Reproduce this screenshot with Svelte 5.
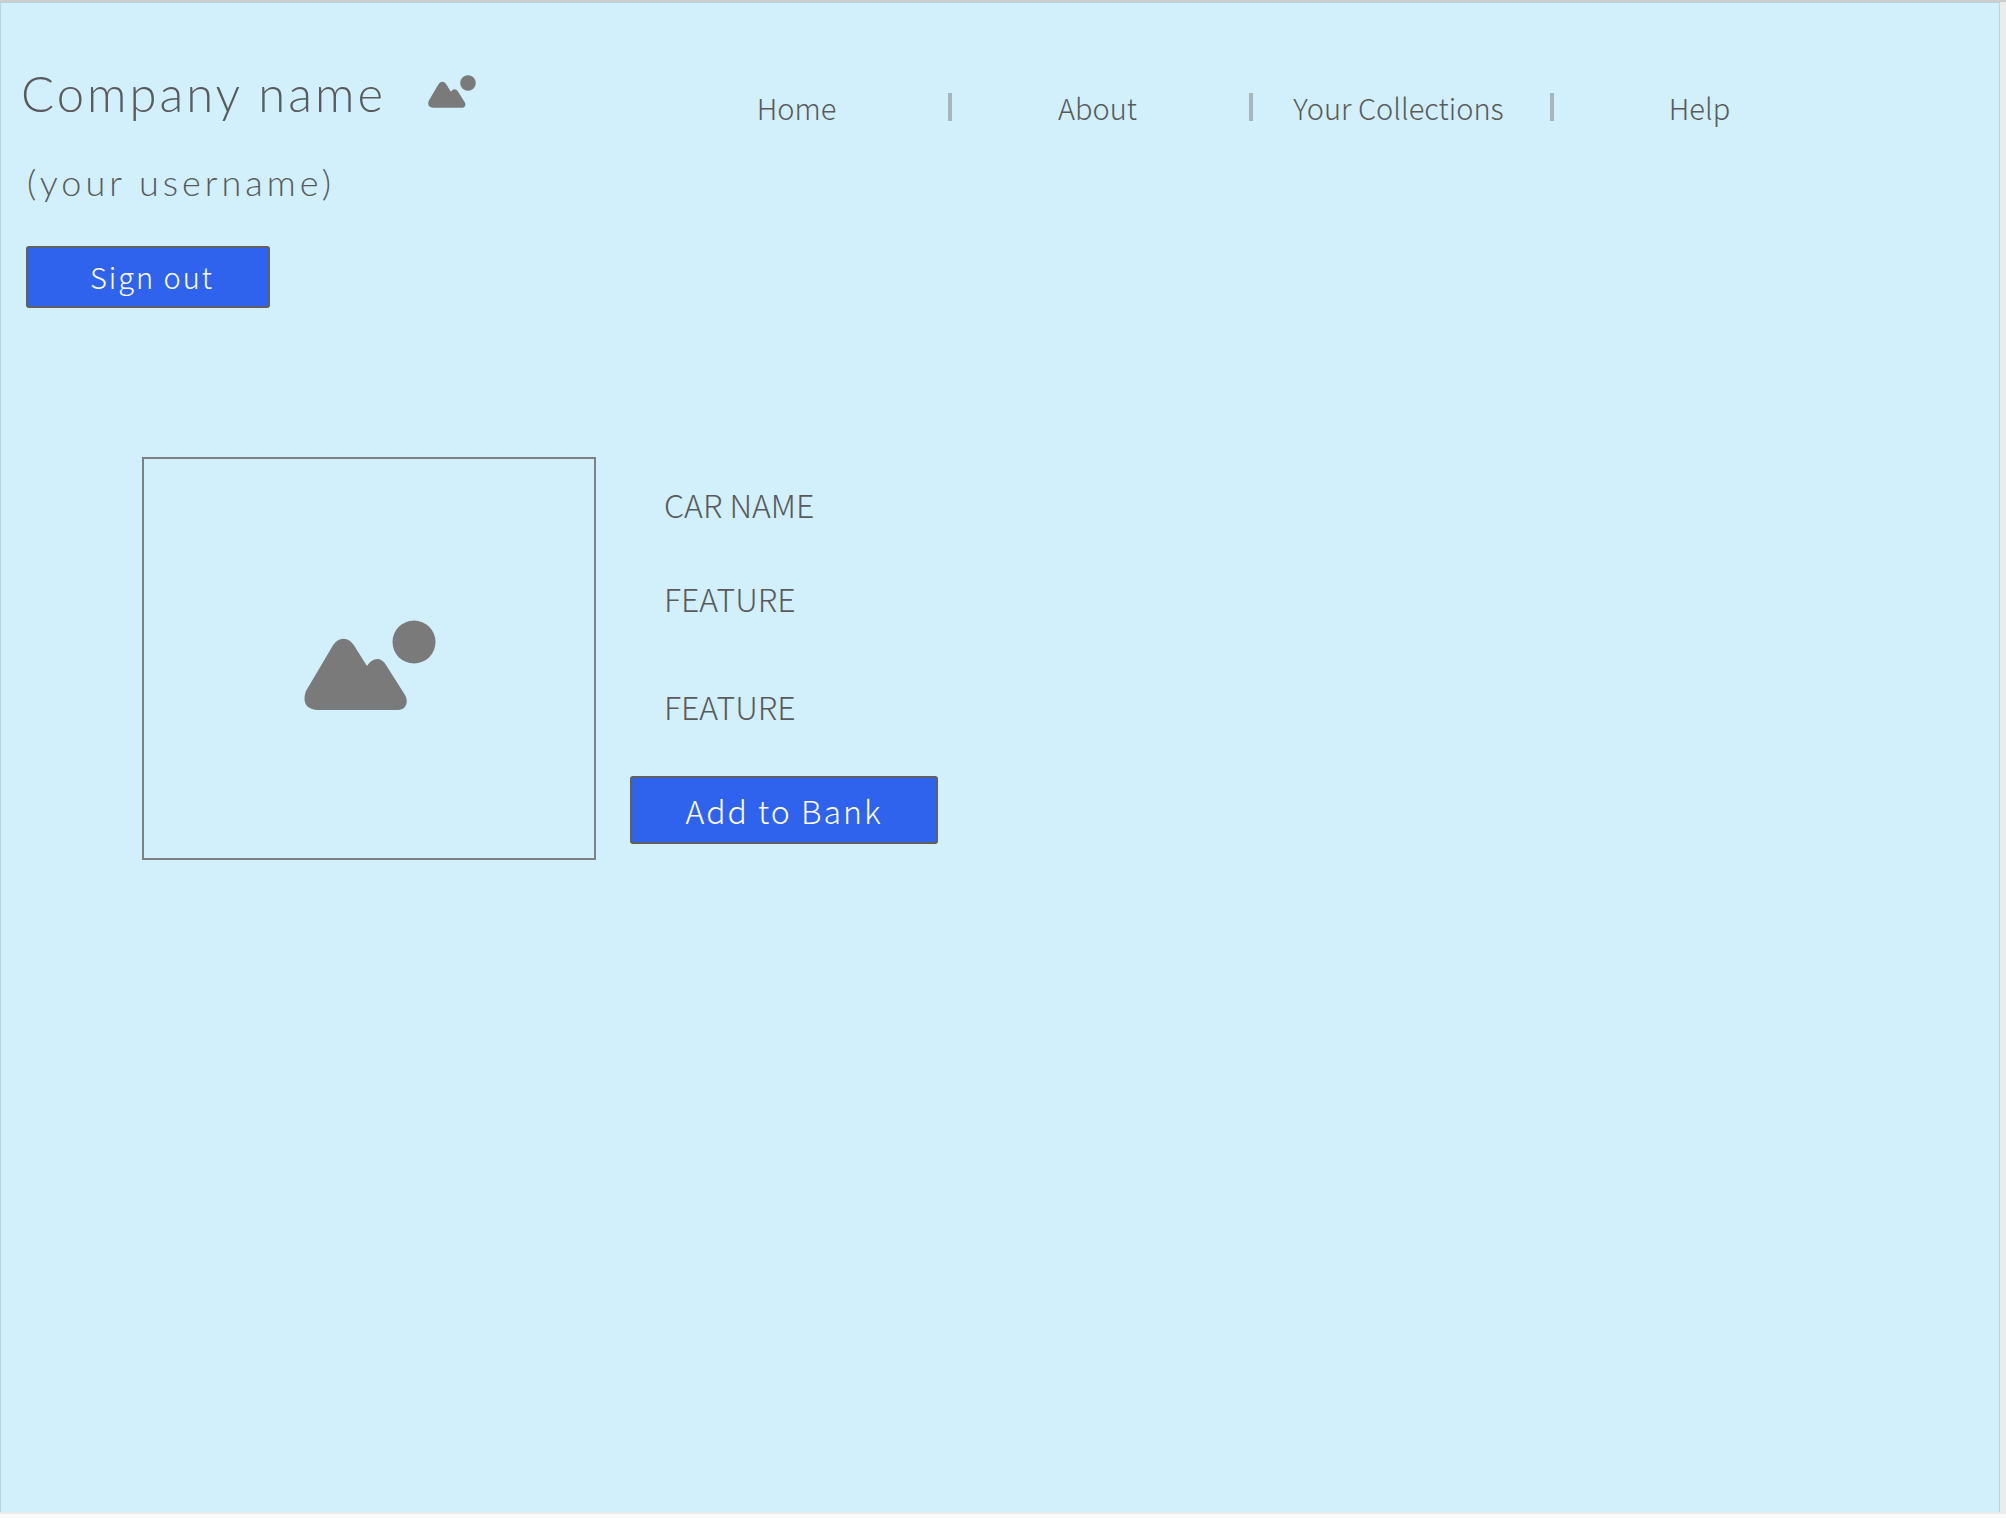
<script>
  const links = ['Home', 'About', 'Your Collections', 'Help'];
  const details = ['CAR NAME', 'FEATURE', 'FEATURE'];
</script>

{#snippet picture()}
  <svg viewBox="0 0 132 90" aria-hidden="true">
    <path
      d="M2 71 L28 27 C34 16 45 16 51 27 L63 46 C69 37 77 37 82 45 L101 75 C105 82 102 90 94 90 H14 C2 90-2 82 2 71 Z"
    />
    <circle cx="110" cy="22" r="21.5" />
  </svg>
{/snippet}

<div class="frame">
  <div class="page">
    <header>
      <div class="account">
        <div class="brand">
          <h1>Company name</h1>
          <span class="logo">{@render picture()}</span>
        </div>
        <p class="username">(your username)</p>
        <button class="sign-out" type="button">Sign out</button>
      </div>
      <nav aria-label="Main">
        <ul>
          {#each links as link}
            <li><a href="#top">{link}</a></li>
          {/each}
        </ul>
      </nav>
    </header>

    <main>
      <div class="photo">{@render picture()}</div>
      <section class="info">
        <ul class="details">
          {#each details as detail}
            <li>{detail}</li>
          {/each}
        </ul>
        <button class="add" type="button">Add to Bank</button>
      </section>
    </main>
  </div>
</div>

<style>
  :global(body) {
    margin: 0;
    background: #ececec;
  }

  .frame {
    box-sizing: border-box;
    display: flex;
    min-height: 100vh;
    padding-right: 6px;
    border-top: 2px solid #cdcdcd;
    border-bottom: 4px solid #fbfbfb;
    padding-bottom: 2px;
  }

  .page {
    flex: 1;
    border: 1px solid #b5d5e1;
    border-bottom: 0;
    background: #d1f0fb;
    color: #5a5a5a;
    font-family: 'Noto Sans CJK JP', 'Noto Sans', sans-serif;
    font-weight: 300;
  }

  h1,
  p,
  ul {
    margin: 0;
    padding: 0;
    font-weight: 300;
    list-style: none;
  }

  header {
    display: flex;
    align-items: flex-start;
  }

  .account {
    box-sizing: border-box;
    flex: 0 0 650px;
    padding: 60px 0 0 20px;
  }

  .brand {
    display: flex;
    gap: 42px;
  }

  h1 {
    font-family: Lato, sans-serif;
    font-size: 49px;
    line-height: 60px;
    letter-spacing: 3px;
  }

  .logo {
    width: 48px;
    padding-top: 12px;
  }

  svg {
    display: block;
    width: 100%;
    fill: #7a7a7a;
  }

  .username {
    padding: 37px 0 0 6px;
    font-family: Lato, sans-serif;
    font-size: 36px;
    line-height: 44px;
    letter-spacing: 4px;
  }

  button {
    display: block;
    box-sizing: border-box;
    padding: 0;
    border: 2px solid #606060;
    border-radius: 3px;
    background: #2f62ed;
    color: #fff;
    font-family: inherit;
    font-weight: 300;
    letter-spacing: 2px;
    cursor: pointer;
  }

  .sign-out {
    width: 244px;
    height: 62px;
    margin: 42px 0 0 5px;
    padding: 0 0 2px 8px;
    font-size: 29px;
  }

  nav {
    flex: 1;
    padding: 90px 144px 0 0;
  }

  nav ul {
    display: grid;
    grid-template-columns: repeat(4, 1fr);
  }

  nav li {
    padding-right: 6px;
    border-right: 4px solid #a5b6bd;
    text-align: center;
  }

  nav li:last-child {
    border-color: transparent;
  }

  a {
    display: block;
    color: inherit;
    font-size: 29px;
    line-height: 28px;
    text-decoration: none;
  }

  main {
    display: flex;
    align-items: flex-start;
    gap: 34px;
    padding: 149px 0 0 141px;
  }

  .photo {
    box-sizing: border-box;
    display: flex;
    align-items: center;
    justify-content: center;
    width: 454px;
    height: 403px;
    padding: 12px 0 0 2px;
    border: 2px solid #808080;
  }

  .photo svg {
    width: 132px;
  }

  .details {
    display: grid;
    gap: 46px;
    padding: 23px 0 0 34px;
    font-size: 32px;
    line-height: 48px;
  }

  .details li:last-child {
    padding-top: 14px;
  }

  .add {
    width: 308px;
    height: 68px;
    margin-top: 46px;
    font-size: 32px;
  }
</style>
